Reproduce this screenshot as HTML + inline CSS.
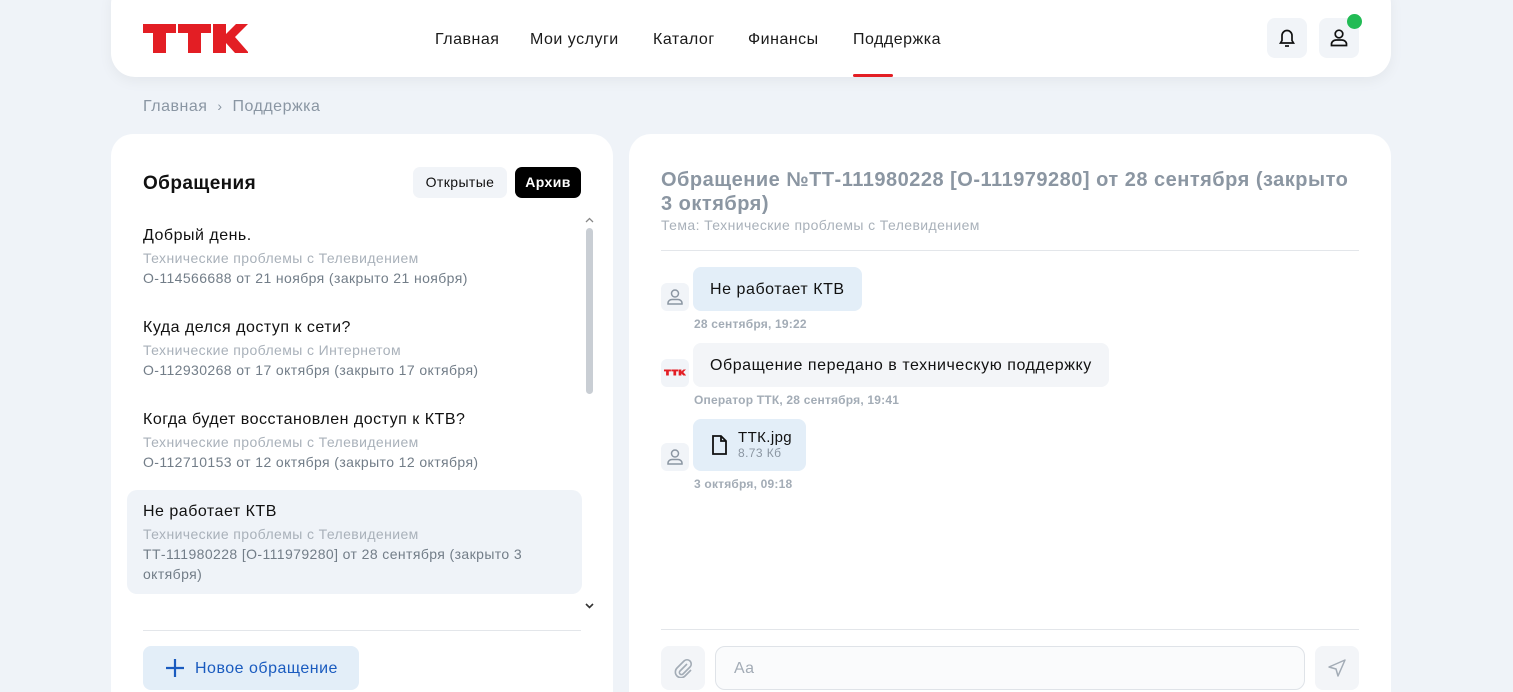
<!DOCTYPE html>
<html><head><meta charset="utf-8"><style>
*{box-sizing:border-box;margin:0;padding:0}
html,body{width:1513px;height:692px;overflow:hidden}
body{background:#eff3f8;font-family:"Liberation Sans",sans-serif;color:#111;position:relative;letter-spacing:.4px}
.hdr{position:absolute;left:111px;top:-20px;width:1280px;height:97px;background:#fff;border-radius:24px;box-shadow:0 4px 14px rgba(0,0,0,.05)}
.nav{position:absolute;top:31px;font-size:16px;color:#1a1a1a;letter-spacing:.5px}
.ib{position:absolute;top:18px;width:40px;height:40px;border-radius:8px;background:#f1f4f8}
.bc{position:absolute;left:143px;top:98px;font-size:16px;color:#8a96a3;letter-spacing:.5px}
.card{position:absolute;background:#fff;border-radius:22px}
.it{position:absolute;left:143px;width:430px}
.it .t{font-size:16px;color:#111;letter-spacing:.5px}
.it .s{font-size:14px;color:#a9b1ba;margin-top:5px}
.it .n{font-size:14px;color:#727d88;margin-top:2px;line-height:20px}
.av{position:absolute;left:661px;width:28px;height:28px;border-radius:6px;background:#f1f4f8}
.bub{position:absolute;left:693px;border-radius:8px;font-size:16px;padding:0 17px;display:flex;align-items:center;letter-spacing:.55px}
.tm{position:absolute;left:694px;font-size:12px;color:#a3acb6;font-weight:bold;letter-spacing:.2px}
</style></head><body>
<div class="hdr"></div>
<svg style="position:absolute;left:143px;top:24px" width="105" height="29" viewBox="0 0 105 29">
<g fill="#e31e24"><path d="M0 0h33v9h-10v20h-13v-20h-10z"/><path d="M35 0h33v9h-10v20h-13v-20h-10z"/><path d="M70 0h13v10l10-10h12l-13 13 14 16h-14l-9-10v10h-13z"/></g></svg>
<div class="nav" style="left:435px">Главная</div>
<div class="nav" style="left:530px">Мои услуги</div>
<div class="nav" style="left:653px">Каталог</div>
<div class="nav" style="left:748px">Финансы</div>
<div class="nav" style="left:853px">Поддержка</div>
<div style="position:absolute;left:853px;top:74px;width:40px;height:3px;background:#e31e24;border-radius:2px"></div>
<div class="ib" style="left:1267px"><svg width="40" height="40" viewBox="0 0 40 40" fill="none" stroke="#111" stroke-width="1.7"><path d="M13.5 25h13l-1.5-2.5v-5a5 5 0 0 0-10 0v5z"/><path d="M18 28h4"/></svg></div>
<div class="ib" style="left:1319px"><svg width="40" height="40" viewBox="0 0 40 40" fill="none" stroke="#111" stroke-width="1.7"><circle cx="20" cy="16" r="3.8"/><path d="M12.5 27.5v-1a5 4 0 0 1 5-4.5h5a5 4 0 0 1 5 4.5v1z"/></svg></div>
<div style="position:absolute;left:1347px;top:14px;width:15px;height:15px;border-radius:50%;background:#22bb55"></div>
<div class="bc">Главная <span style="font-size:14px;margin:0 5px">›</span> Поддержка</div>

<div class="card" style="left:111px;top:134px;width:502px;height:600px"></div>
<div style="position:absolute;left:143px;top:173px;font-size:19px;font-weight:bold">Обращения</div>
<div style="position:absolute;left:413px;top:167px;width:94px;height:31px;border-radius:7px;background:#f1f4f8;font-size:14px;text-align:center;line-height:31px">Открытые</div>
<div style="position:absolute;left:515px;top:167px;width:66px;height:31px;border-radius:7px;background:#000;color:#fff;font-size:14px;text-align:center;line-height:31px;font-weight:bold">Архив</div>
<div style="position:absolute;left:586px;top:228px;width:7px;height:166px;border-radius:4px;background:#c9ced4"></div>
<svg style="position:absolute;left:585px;top:217px" width="9" height="6" fill="none" stroke="#888" stroke-width="1.3"><path d="M1 5l3.5-3.5 3.5 3.5"/></svg>
<svg style="position:absolute;left:585px;top:603px" width="9" height="6" fill="none" stroke="#333" stroke-width="1.6"><path d="M1 1l3.5 3.5 3.5-3.5"/></svg>
<div class="it" style="top:227px"><div class="t">Добрый день.</div><div class="s">Технические проблемы с Телевидением</div><div class="n">О-114566688 от 21 ноября (закрыто 21 ноября)</div></div>
<div class="it" style="top:319px"><div class="t">Куда делся доступ к сети?</div><div class="s">Технические проблемы с Интернетом</div><div class="n">О-112930268 от 17 октября (закрыто 17 октября)</div></div>
<div class="it" style="top:411px"><div class="t">Когда будет восстановлен доступ к КТВ?</div><div class="s">Технические проблемы с Телевидением</div><div class="n">О-112710153 от 12 октября (закрыто 12 октября)</div></div>
<div style="position:absolute;left:127px;top:490px;width:455px;height:104px;border-radius:10px;background:#eff3f8"></div>
<div class="it" style="top:503px;width:400px"><div class="t">Не работает КТВ</div><div class="s">Технические проблемы с Телевидением</div><div class="n">ТТ-111980228 [О-111979280] от 28 сентября (закрыто 3 октября)</div></div>
<div style="position:absolute;left:143px;top:630px;width:438px;height:1px;background:#e3e6ea"></div>
<div style="position:absolute;left:143px;top:646px;width:216px;height:44px;border-radius:8px;background:#e3eef8;color:#1a5bbf;font-size:16px;line-height:46px;padding-left:52px;letter-spacing:.5px">Новое обращение</div>
<svg style="position:absolute;left:165px;top:658px" width="20" height="20" stroke="#1a5bbf" stroke-width="2.2"><path d="M10 1v18M1 10h18"/></svg>

<div class="card" style="left:629px;top:134px;width:762px;height:600px"></div>
<div style="position:absolute;left:661px;top:168px;width:700px;font-size:20px;font-weight:bold;color:#8b96a2;line-height:24px;letter-spacing:.5px">Обращение №ТТ-111980228 [О-111979280] от 28 сентября (закрыто 3 октября)</div>
<div style="position:absolute;left:661px;top:217px;font-size:14px;color:#a9b1ba">Тема: Технические проблемы с Телевидением</div>
<div style="position:absolute;left:661px;top:250px;width:698px;height:1px;background:#e3e6ea"></div>

<div class="av" style="top:283px"><svg width="28" height="28" fill="none" stroke="#8b96a2" stroke-width="1.5"><circle cx="14" cy="10.5" r="3.5"/><path d="M7 21v-1a4 3.5 0 0 1 4-3.5h6a4 3.5 0 0 1 4 3.5v1z"/></svg></div>
<div class="bub" style="top:267px;height:44px;background:#e3eef8;padding-top:2px">Не работает КТВ</div>
<div class="tm" style="top:317px">28 сентября, 19:22</div>
<div class="av" style="top:359px"><svg style="position:absolute;left:3px;top:10px" width="22" height="7" viewBox="0 0 105 29"><g fill="#e31e24"><path d="M0 0h33v9h-10v20h-13v-20h-10z"/><path d="M35 0h33v9h-10v20h-13v-20h-10z"/><path d="M70 0h13v10l10-10h12l-13 13 14 16h-14l-9-10v10h-13z"/></g></svg></div>
<div class="bub" style="top:343px;height:44px;background:#f3f5f8;padding-top:2px">Обращение передано в техническую поддержку</div>
<div class="tm" style="top:393px">Оператор ТТК, 28 сентября, 19:41</div>
<div class="av" style="top:443px"><svg width="28" height="28" fill="none" stroke="#8b96a2" stroke-width="1.5"><circle cx="14" cy="10.5" r="3.5"/><path d="M7 21v-1a4 3.5 0 0 1 4-3.5h6a4 3.5 0 0 1 4 3.5v1z"/></svg></div>
<div style="position:absolute;left:693px;top:419px;width:113px;height:52px;border-radius:8px;background:#e3eef8"></div>
<svg style="position:absolute;left:710px;top:434px" width="20" height="22" fill="none" stroke="#111" stroke-width="1.8"><path d="M3 2h8l5 5v13h-13z"/><path d="M11 2v5h5"/></svg>
<div style="position:absolute;left:738px;top:429px;font-size:15px">ТТК.jpg</div>
<div style="position:absolute;left:738px;top:446px;font-size:12px;color:#8b96a2">8.73 Кб</div>
<div class="tm" style="top:477px">3 октября, 09:18</div>

<div style="position:absolute;left:661px;top:629px;width:698px;height:1px;background:#e3e6ea"></div>
<div style="position:absolute;left:661px;top:646px;width:44px;height:44px;border-radius:8px;background:#f3f5f8"></div>
<svg style="position:absolute;left:673px;top:658px" width="20" height="20" fill="none" stroke="#a3acb6" stroke-width="1.6"><path d="M14 6l-7 7a2 2 0 0 0 3 3l7-7a4 4 0 0 0-6-6l-7 7a5.5 5.5 0 0 0 8 8l6-6"/></svg>
<div style="position:absolute;left:715px;top:646px;width:590px;height:44px;border-radius:10px;border:1.5px solid #dfe3e8;background:#fafbfc;font-size:16px;color:#a3acb6;line-height:43px;padding-left:18px">Aa</div>
<div style="position:absolute;left:1315px;top:646px;width:44px;height:44px;border-radius:8px;background:#f3f5f8"></div>
<svg style="position:absolute;left:1327px;top:658px" width="20" height="20" fill="none" stroke="#a3acb6" stroke-width="1.5" stroke-linejoin="round"><path d="M18 2L2 9l7 2 2 7z"/></svg>
</body></html>
